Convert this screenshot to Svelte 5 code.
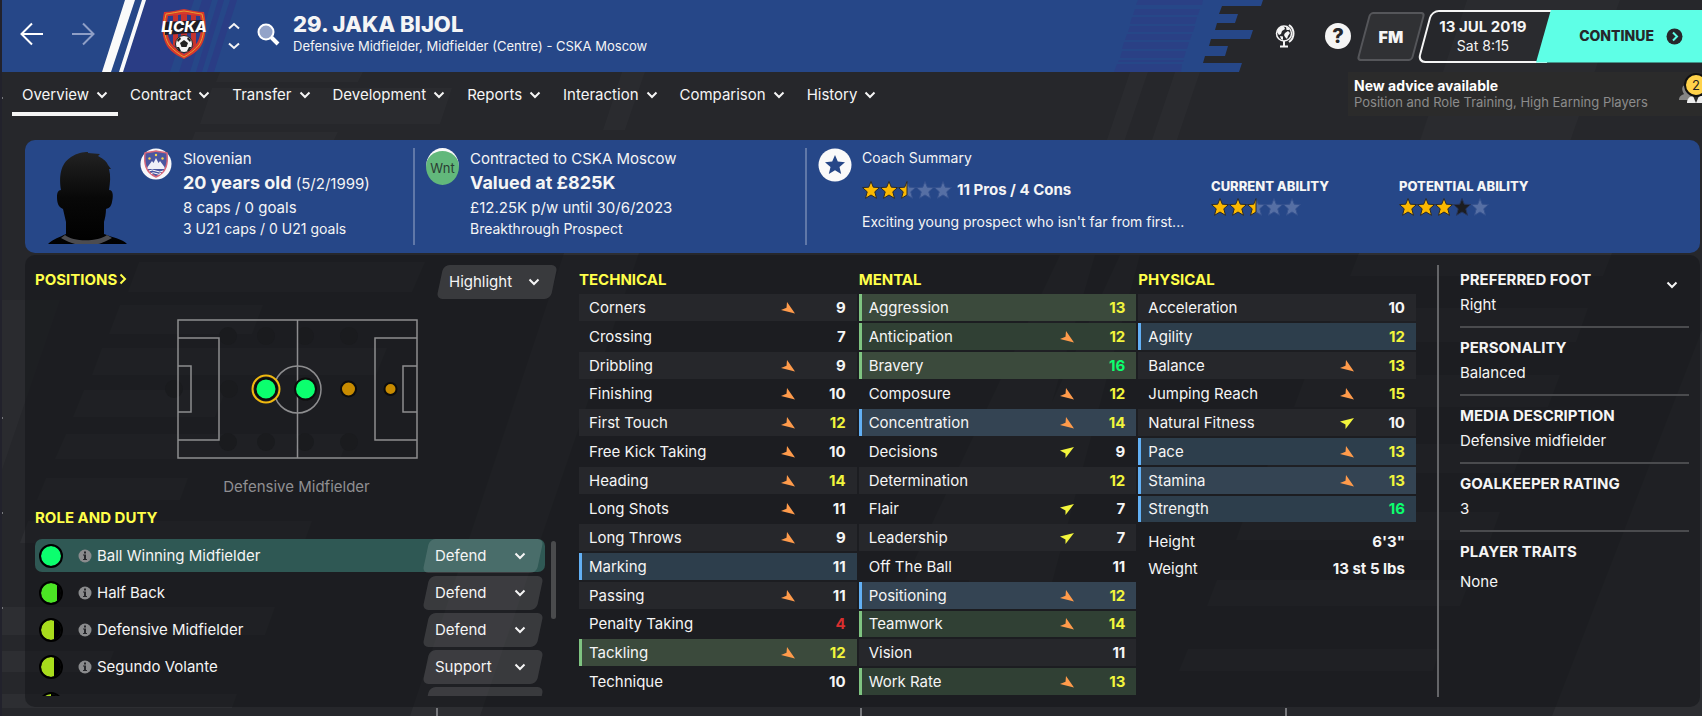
<script>
    const tabs = ['Overview', 'Contract', 'Transfer', 'Development', 'Reports', 'Interaction', 'Comparison', 'History'];

    const roles = [
        { name: 'Ball Winning Midfielder', duty: 'Defend', color: '#0bff6e', fill: 100, selected: true },
        { name: 'Half Back', duty: 'Defend', color: '#4be524', fill: 80 },
        { name: 'Defensive Midfielder', duty: 'Defend', color: '#a8dc1c', fill: 66 },
        { name: 'Segundo Volante', duty: 'Support', color: '#a8dc1c', fill: 66 },
        { name: '', duty: '', color: '#a8dc1c', fill: 50 }
    ];

    // [name, value, trend, importance for the selected role]
    const groups = [
        {
            title: 'TECHNICAL',
            rows: [
                ['Corners', 9, 'down', ''],
                ['Crossing', 7, '', ''],
                ['Dribbling', 9, 'down', ''],
                ['Finishing', 10, 'down', ''],
                ['First Touch', 12, 'down', ''],
                ['Free Kick Taking', 10, 'down', ''],
                ['Heading', 14, 'down', ''],
                ['Long Shots', 11, 'down', ''],
                ['Long Throws', 9, 'down', ''],
                ['Marking', 11, '', 'useful'],
                ['Passing', 11, 'down', ''],
                ['Penalty Taking', 4, '', ''],
                ['Tackling', 12, 'down', 'key'],
                ['Technique', 10, '', '']
            ]
        },
        {
            title: 'MENTAL',
            rows: [
                ['Aggression', 13, '', 'key'],
                ['Anticipation', 12, 'down', 'key'],
                ['Bravery', 16, '', 'key'],
                ['Composure', 12, 'down', ''],
                ['Concentration', 14, 'down', 'useful'],
                ['Decisions', 9, 'up', ''],
                ['Determination', 12, '', ''],
                ['Flair', 7, 'up', ''],
                ['Leadership', 7, 'up', ''],
                ['Off The Ball', 11, '', ''],
                ['Positioning', 12, 'down', 'useful'],
                ['Teamwork', 14, 'down', 'key'],
                ['Vision', 11, '', ''],
                ['Work Rate', 13, 'down', 'key']
            ]
        },
        {
            title: 'PHYSICAL',
            rows: [
                ['Acceleration', 10, '', ''],
                ['Agility', 12, '', 'useful'],
                ['Balance', 13, 'down', ''],
                ['Jumping Reach', 15, 'down', ''],
                ['Natural Fitness', 10, 'up', ''],
                ['Pace', 13, 'down', 'useful'],
                ['Stamina', 13, 'down', 'useful'],
                ['Strength', 16, '', 'useful']
            ]
        }
    ];

    const details = [
        ['PREFERRED FOOT', 'Right'],
        ['PERSONALITY', 'Balanced'],
        ['MEDIA DESCRIPTION', 'Defensive midfielder'],
        ['GOALKEEPER RATING', '3'],
        ['PLAYER TRAITS', 'None']
    ];

    const spots = [[228, 336], [266, 336], [305, 336], [349, 336], [174, 389], [229, 389], [228, 442], [266, 442], [305, 442], [349, 442]];

    function level(value) {
        if (value <= 5) return 'poor';
        if (value <= 11) return 'average';
        if (value <= 15) return 'good';
        return 'excellent';
    }

    const star = 'M9 0.5 L11.3 6.2 L17.5 6.6 L12.8 10.8 L14.5 17.3 L9 14 L3.5 17.3 L5.2 10.8 L0.5 6.6 L6.7 6.2 Z';
    const leftHalf = 'M9 0.5 L9 14 L3.5 17.3 L5.2 10.8 L0.5 6.6 L6.7 6.2 Z';
</script>

{#snippet chevron()}
    <svg class="chevron" width="12" height="8" viewBox="0 0 12 8" aria-hidden="true"><path d="M1.5 1.5 L6 6 L10.5 1.5" /></svg>
{/snippet}

{#snippet stars(list)}
    <span class="stars">
        {#each list as kind}
            <svg width="18" height="18" viewBox="0 0 18 18" aria-hidden="true">
                <path d={star} class={kind === 'half' ? 'none' : kind} />
                {#if kind === 'half'}<path d={leftHalf} class="full" />{/if}
            </svg>
        {/each}
    </span>
{/snippet}

<div class="app">
    <svg class="backdrop" width="1702" height="716" aria-hidden="true">
        <g fill="#fff" fill-opacity="0.018">
            <path d="M220 72 H363 L358 82 H216Z M212 88 H452 L440 124 H200Z M622 72 H645 L625 130 H603Z M195 132 H338 L334 140 H192Z" />
            <path d="M2 300 H60 L2 470Z M1130 72 H1148 L1118 160 H1100Z M1175 72 H1200 L1160 190 H1135Z M1467 0 H1620 L1560 170 H1410Z" />
        </g>
        <g fill="#fff" fill-opacity="0.035">
            <path d="M139 262 H425 L412 292 H128Z M120 305 H263 L252 334 H109Z M102 348 H387 L376 375 H92Z M84 390 H226 L215 417 H73Z M66 434 H350 L340 459 H55Z M46 478 H188 L180 500 H37Z M28 521 H312 L304 543 H20Z M2 607 H275 L265 635 H2Z M2 651 H114 L106 672 H2Z M2 694 H237 L232 708 H2Z" />
            <path d="M565 250 H640 L480 716 H410Z M1060 255 H1095 L1000 580 H905Z M1120 255 H1140 L1050 590 H965Z" />
            <path d="M1359 253 H1612 L1603 276 H1350Z M1335 308 H1588 L1576 342 H1323Z M1306 375 H1560 L1548 407 H1294Z M1275 444 H1524 L1514 473 H1265Z M1246 512 H1500 L1490 540 H1236Z M1217 580 H1470 L1460 606 H1207Z M1188 649 H1440 L1433 671 H1179Z M1702 330 V716 H1552Z" />
        </g>
        <path d="M0 48 H3 M0 98 H3 M0 418 H3 M0 513 H3 M0 608 H3 M437 708 V716 M861 708 V716 M1286 708 V716" stroke="#77787c" stroke-width="2" />
    </svg>

    <header class="topbar">
        <div class="titlebar">
            <svg class="stripes" width="245" height="72" aria-hidden="true">
                <path d="M144 0 H192 L168 72 H121Z M200 0 H210 L188 72 H177Z M216 0 H222 L200 72 H194Z M228 0 H235 L212 72 H205Z" fill="#2a3d85" />
                <path d="M123 0 H133 L109 72 H100Z M140 0 H144 L121 72 H117Z" fill="#fafafa" />
            </svg>
            <button class="icon back" aria-label="Back">
                <svg width="24" height="24" viewBox="0 0 24 24"><path d="M23 12 H2 M12 1.5 L1.5 12 L12 22.5" fill="none" stroke="#fff" stroke-width="2" /></svg>
            </button>
            <button class="icon forward" aria-label="Forward">
                <svg width="24" height="24" viewBox="0 0 24 24"><path d="M1 12 H22 M12 1.5 L22.5 12 L12 22.5" fill="none" stroke="#8f9fc6" stroke-width="2" /></svg>
            </button>
            <svg class="crest" width="46" height="52" viewBox="0 0 46 52" role="img" aria-label="CSKA Moscow">
                <path d="M23 1 C30 2 37 4 43 4 C46 18 45 30 40 38 C36 44 29 48 23 51 C17 48 10 44 6 38 C1 30 0 18 3 4 C9 4 16 2 23 1Z" fill="#d8382c" />
                <path d="M23 3 C30 4 36 5.500 41 6 C44 18 43 29 38 37 C34 42 28 46 23 49 C18 46 12 42 8 37 C3 29 2 18 5 6 C10 5.500 16 4 23 3Z" fill="none" stroke="#e6a02f" />
                <path d="M23 6 C29 7 34 8 39 8 C41 18 40 28 36 35 C32 40 27 43 23 46 C19 43 14 40 10 35 C6 28 5 18 7 8 C12 8 17 7 23 6Z" fill="#2b3d8d" />
                <path d="M12 7 H17 V40 L12 37Z M20 6 H26 V43 L20 44Z M30 7 H35 V37 L30 40Z" fill="#c7332e" />
                <path d="M4 14 L41 12 L43 24 L4 27Z" fill="#1f1c24" />
                <text x="23" y="24" text-anchor="middle" fill="#fff" font-size="15" font-weight="800" font-style="italic">ЦСКА</text>
                <circle cx="23" cy="36" r="8.500" fill="#f5f5f5" stroke="#222" />
                <path d="M23 32 L27 35 L25.500 39 H20.500 L19 35Z M16 32 L19 29 L20 31 L17 34Z M27 29 L30 32 L29 34 L26 31Z M15.500 39 L18 39 L20 43 L18 43Z M30.500 39 L28 39 L26 43 L28 43Z" fill="#222" />
            </svg>
            <div class="stepper">
                <button class="icon" aria-label="Previous player"><svg width="12" height="8" viewBox="0 0 12 8"><path class="stroke" d="M1 6.500 L6 2 L11 6.500" /></svg></button>
                <button class="icon" aria-label="Next player"><svg width="12" height="8" viewBox="0 0 12 8"><path class="stroke" d="M1 1.500 L6 6 L11 1.500" /></svg></button>
            </div>
            <button class="icon search" aria-label="Search">
                <svg width="23" height="23" viewBox="0 0 23 23"><circle cx="9" cy="9" r="7.500" fill="#93a3c8" stroke="#fff" stroke-width="2" /><path d="M14.500 14.500 L21 21" stroke="#fff" stroke-width="4" /></svg>
            </button>
            <div class="player">
                <h1>29. JAKA BIJOL</h1>
                <p>Defensive Midfielder, Midfielder (Centre) - CSKA Moscow</p>
            </div>
        </div>
        <svg class="flag" width="156" height="72" viewBox="0 0 156 72" aria-hidden="true">
            <path d="M0 0 H155 L153 6 H114 L111 14 H130 L127 23 H109 L107 30 H145 L142 39 H103 L101 46 H120 L117 56 H97 L95 63 H134 L131 72 H0Z" fill="#264788" />
            <path d="M30 0 H95 L94 5 H28Z M27 9 H92 L90 15 H25Z M24 17 H89 L87 24 H22Z M22 26 H87 L85 32 H20Z M19 34 H84 L82 40 H17Z M16 42 H81 L79 49 H14Z M14 51 H78 L76 58 H12Z M11 60 H76 L75 62 H10Z M9 64 H74 L73 72 H6Z" fill="#2a4085" />
        </svg>
        <button class="icon globe" aria-label="World">
            <svg width="20" height="24" viewBox="0 0 20 24">
                <circle cx="9" cy="9.500" r="7.500" fill="#26272b" stroke="#f5f5f5" stroke-width="1.500" />
                <path d="M3 5 L6 3 L9 2.500 L10 5 L7 7 L6 10 L4 11 L2 8Z M10 9 L13 7 L15 9 L13 12 L12 15 L10 13 L9 11Z M5 12 L8 12.500 L8 16 L6 15Z M11 2.500 L14 4 L14 6 L11.500 6Z" fill="#f5f5f5" />
                <path d="M14 1 C20 5 20 14 14 18 M9 17 V22 M5 22.500 H13" fill="none" stroke="#f5f5f5" stroke-width="2" />
            </svg>
        </button>
        <button class="icon help" aria-label="Help">?</button>
        <button class="fm"><span>FM</span></button>
        <div class="clock">
            <div class="date">
                <strong>13 JUL 2019</strong>
                <span>Sat 8:15</span>
            </div>
            <button class="continue">
                CONTINUE
                <svg width="17" height="17" viewBox="0 0 17 17" aria-hidden="true"><circle cx="8.500" cy="8.500" r="8" fill="#26272b" /><path d="M7 4.500 L11 8.500 L7 12.500" fill="none" stroke="#5effe6" stroke-width="2" /></svg>
            </button>
        </div>
    </header>

    <div class="menubar">
        <nav>
            {#each tabs as tab, i}
                <a href="#{tab.toLowerCase()}" class:active={i === 0}>{tab}{@render chevron()}</a>
            {/each}
        </nav>
        <div class="advice">
            <div>
                <strong>New advice available</strong>
                <span>Position and Role Training, High Earning Players</span>
            </div>
            <svg width="24" height="34" viewBox="0 0 24 34" aria-hidden="true">
                <path d="M1 28 C1 24 4 23 6 22 C3 17 4 13 8 13 H14 V28Z" fill="#858585" />
                <path d="M9 31 C9 27 11 25 14 24 H24 V31Z" fill="#eee" />
                <path d="M15 24 L18 31 L21 24Z" fill="#2b2b2b" />
                <circle cx="18" cy="13" r="11" fill="#ffd24a" stroke="#111" stroke-width="2" />
                <text x="18" y="18" text-anchor="middle" font-size="13" fill="#222">2</text>
            </svg>
        </div>
    </div>

    <section class="hero">
        <div class="bio">
            <svg class="photo" width="80" height="92" viewBox="0 0 80 92" aria-hidden="true">
                <defs>
                    <linearGradient id="shade" x1="0" y1="0" x2="0" y2="1">
                        <stop offset="0" stop-color="#222" />
                        <stop offset="0.500" stop-color="#080808" />
                        <stop offset="1" stop-color="#000" />
                    </linearGradient>
                </defs>
                <path d="M0 92 C5 87 12 85 18 82 V70 C17 66 16 61 15 57 C10 55 9 50 9 45 C9 41 10 38 13 38 C11 25 12 12 23 5 C29 1 35 0 40 0 L40 1 L52 2 L50 4 C56 7 59 10 60 13 L63 17 L61 17 C63 24 62 31 61 38 C66 38 65 46 64 50 C63 55 61 56 58 57 C58 62 57 66 56 70 V82 C63 85 75 87 79 92Z" fill="url(#shade)" />
                <path d="M17 83 C25 90 50 90 59 83 L64 86 C56 90 52 92 49 92 H27 C23 91 18 89 13 86Z" fill="#4c4c50" />
            </svg>
            <svg class="nation" width="32" height="32" viewBox="0 0 32 32" role="img" aria-label="Slovenia">
                <circle cx="16" cy="16" r="15.500" fill="#f7f7fa" />
                <path d="M5 5 C9 4 13 4 16 3 C19 4 23 4 27 5 C28 15 27 24 16 29 C5 24 4 15 5 5Z" fill="#4a56a0" stroke="#d6677a" stroke-width="1.500" />
                <path d="M7.500 19 L12 13 L13.500 15 L16 10 L18.500 15 L20 13 L24.500 19 V21 H7.500Z" fill="#f0f0f8" />
                <path d="M9 23 Q12 21 16 23 T23 23 M11 25.500 Q13 24 16 25.500 T21 25.500" fill="none" stroke="#fff" />
                <g fill="#f5d34b"><circle cx="16" cy="7" r="1.200" /><circle cx="9.500" cy="10.500" r="1.200" /><circle cx="22.500" cy="10.500" r="1.200" /></g>
            </svg>
            <div class="facts">
                <p>Slovenian</p>
                <p class="big"><strong>20 years old</strong> (5/2/1999)</p>
                <p>8 caps / 0 goals</p>
                <p class="tight">3 U21 caps / 0 U21 goals</p>
            </div>
        </div>
        <div class="deal">
            <span class="wanted">Wnt</span>
            <div class="facts">
                <p>Contracted to CSKA Moscow</p>
                <p class="big"><strong>Valued at £825K</strong></p>
                <p>£12.25K p/w until 30/6/2023</p>
                <p class="tight">Breakthrough Prospect</p>
            </div>
        </div>
        <div class="coach">
            <svg class="medal" width="34" height="34" viewBox="0 0 34 34" aria-hidden="true">
                <circle cx="17" cy="17" r="16.500" fill="#fafafa" />
                <path d="M17 7 L19.800 13.600 L27 14.200 L21.500 18.900 L23.200 26 L17 22.200 L10.800 26 L12.500 18.900 L7 14.200 L14.200 13.600Z" fill="#264788" />
            </svg>
            <div class="summary">
                <p>Coach Summary</p>
                <p class="rating">{@render stars(['full', 'full', 'half', 'none', 'none'])}<strong>11 Pros / 4 Cons</strong></p>
                <p>Exciting young prospect who isn't far from first...</p>
            </div>
            <div class="ability">
                <h3>CURRENT ABILITY</h3>
                {@render stars(['full', 'full', 'half', 'none', 'none'])}
            </div>
            <div class="ability">
                <h3>POTENTIAL ABILITY</h3>
                {@render stars(['full', 'full', 'full', 'dark', 'none'])}
            </div>
        </div>
    </section>

    <main class="panel">
        <section class="positions">
            <div class="head">
                <h2><a href="#positions">POSITIONS<svg width="8" height="12" viewBox="0 0 8 12" aria-hidden="true"><path d="M1.500 1.500 L6 6 L1.500 10.500" fill="none" stroke="#ffff4a" stroke-width="2" /></svg></a></h2>
                <div class="dropdown">
                    <select aria-label="Highlight"><option>Highlight</option></select>
                    {@render chevron()}
                </div>
            </div>
            <svg class="pitch" width="260" height="142" viewBox="164 318 260 142" role="img" aria-label="Pitch positions">
                <g fill="#1a1b1e">
                    {#each spots as [x, y]}<circle cx={x} cy={y} r="9" />{/each}
                </g>
                <g fill="none" stroke="#8d8d8f" stroke-width="1.500">
                    <path d="M178 320 H417 V458 H178Z M297.500 320 V458 M178 338 H219 V440 H178 M417 338 H375 V440 H417 M178 366 H191 V412 H178 M417 366 H403 V412 H417" />
                    <circle cx="297.500" cy="389.500" r="23.500" />
                </g>
                <circle cx="266" cy="389" r="13.500" fill="#1c1d20" stroke="#f0b90f" stroke-width="2" />
                <g stroke="#0c0c0c" stroke-width="2">
                    <circle cx="266" cy="389" r="10.500" fill="#0bff6e" />
                    <circle cx="305.500" cy="389" r="10.500" fill="#0bff6e" />
                    <circle cx="348.500" cy="389" r="7.500" fill="#c88b00" />
                    <circle cx="390.500" cy="389" r="6" fill="#c88b00" />
                </g>
            </svg>
            <p class="position">Defensive Midfielder</p>

            <h2>ROLE AND DUTY</h2>
            <div class="roles">
                <ul>
                    {#each roles as role}
                        <li class:selected={role.selected}>
                            <span class="dot" style="background: linear-gradient(to right, {role.color} {role.fill}%, #000 {role.fill}%)"></span>
                            <svg width="14" height="14" viewBox="0 0 14 14" aria-hidden="true"><circle cx="7" cy="7" r="6.500" /><path d="M6 2.500 H8 V4.500 H6Z M5 5.500 H8 V10 H9 V11 H5 V10 H6 V6.500 H5Z" /></svg>
                            <span class="name">{role.name}</span>
                            <div class="dropdown">
                                <select aria-label="{role.name} duty"><option>{role.duty}</option></select>
                                {@render chevron()}
                            </div>
                        </li>
                    {/each}
                </ul>
                <div class="scrollbar"></div>
            </div>
        </section>

        <section class="attributes">
            {#each groups as group}
                <div>
                    <table>
                        <caption>{group.title}</caption>
                        <tbody>
                            {#each group.rows as [name, value, trend, importance]}
                                <tr class={importance}>
                                    <th scope="row">{name}</th>
                                    <td class="trend">
                                        {#if trend === 'down'}
                                            <svg width="14" height="12" viewBox="0 0 14 12" aria-label="Falling"><path d="M6 0 L14 11.500 L0 8 L5.500 5.800Z" fill="#ff9b4b" /></svg>
                                        {:else if trend === 'up'}
                                            <svg width="14" height="12" viewBox="0 0 14 12" aria-label="Rising"><path d="M14 1 L5.500 12 L5.500 7.500 L0 4.500Z" fill="#f3f53c" /></svg>
                                        {/if}
                                    </td>
                                    <td class="value {level(value)}">{value}</td>
                                </tr>
                            {/each}
                        </tbody>
                    </table>
                    {#if group.title === 'PHYSICAL'}
                        <dl class="body">
                            <dt>Height</dt>
                            <dd>6'3"</dd>
                            <dt>Weight</dt>
                            <dd>13 st 5 lbs</dd>
                        </dl>
                    {/if}
                </div>
            {/each}
        </section>

        <aside>
            <dl>
                {#each details as [label, text]}
                    <div>
                        <dt>{label}</dt>
                        <dd>{text}</dd>
                    </div>
                {/each}
            </dl>
            <button class="icon more" aria-label="More details">{@render chevron()}</button>
        </aside>
    </main>
</div>

<style>
    :global(body) {
        background: #26272b;
    }

    .app {
        position: relative;
        min-height: 100vh;
        padding-bottom: 10px;
        border-left: 2px solid #22222c;
        box-sizing: border-box;
        overflow: hidden;
        color: #f5f5f5;
        font-family: Inter, "Liberation Sans", sans-serif;
        font-size: 15px;
        line-height: 20px;
    }

    .backdrop {
        position: absolute;
        top: 0;
        left: -2px;
    }

    h1, h2, h3, p, ul, dl, dd {
        margin: 0;
        padding: 0;
    }

    button, select {
        border: 0;
        padding: 0;
        background: none;
        color: inherit;
        font: inherit;
        cursor: pointer;
    }

    a {
        color: inherit;
        text-decoration: none;
    }

    .icon {
        display: flex;
        align-items: center;
        justify-content: center;
        flex: none;
    }

    .chevron path, .stroke {
        fill: none;
        stroke: #f5f5f5;
        stroke-width: 2;
    }

    /* top bar */
    .topbar {
        position: relative;
        display: flex;
        align-items: center;
        height: 72px;
    }

    .titlebar {
        position: relative;
        display: flex;
        flex: 1;
        align-items: center;
        height: 72px;
        box-sizing: border-box;
        padding: 0 0 4px 18px;
        background: #264788;
    }

    .titlebar > :not(.stripes) {
        position: relative;
    }

    .stripes {
        position: absolute;
        top: 0;
        left: 0;
    }

    .forward {
        margin-left: 27px;
    }

    .crest {
        margin-left: 66px;
    }

    .stepper {
        display: flex;
        flex-direction: column;
        gap: 12px;
        margin: 4px 0 0 21px;
    }

    .search {
        margin-left: 17px;
    }

    .player {
        margin-left: 13px;
        white-space: nowrap;
    }

    h1 {
        font-size: 22px;
        font-weight: 800;
        line-height: 24px;
    }

    .player p {
        font-size: 13px;
    }

    .flag {
        flex: none;
        margin-left: -1px;
    }

    .globe {
        margin-left: 11px;
    }

    .help {
        width: 26px;
        height: 26px;
        margin: 0 7px 0 30px;
        border-radius: 50%;
        background: #f5f5f5;
        color: #26272b;
        font-size: 20px;
        font-weight: 800;
    }

    .fm {
        width: 56px;
        height: 49px;
        margin-left: 5px;
        border: 2px solid #55565a;
        border-radius: 4px;
        box-sizing: border-box;
        background: #303134;
        font-size: 16px;
        font-weight: 900;
        transform: skewX(-15deg);
    }

    .fm span {
        display: block;
        transform: skewX(15deg);
    }

    .clock {
        position: relative;
        display: flex;
        width: 286px;
        height: 53px;
        margin-left: -3px;
    }

    .date {
        position: relative;
        display: flex;
        flex-direction: column;
        align-items: center;
        width: 134px;
        padding-top: 7px;
        box-sizing: border-box;
        line-height: 19px;
    }

    .date::before {
        content: '';
        position: absolute;
        inset: 0 -4px 0 8px;
        border: 2px solid #f5f5f5;
        border-radius: 8px 0 0 8px;
        transform: skewX(-15deg);
    }

    .date strong, .date span {
        position: relative;
        font-size: 15px;
    }

    .date span {
        font-size: 14px;
    }

    .continue {
        position: relative;
        display: flex;
        flex: 1;
        align-items: center;
        justify-content: flex-end;
        gap: 12px;
        margin-left: -14px;
        padding-right: 19px;
        background: #5effe6;
        clip-path: polygon(15px 0, 100% 0, 100% 100%, 0 100%);
        color: #26272b;
        font-size: 14px;
        font-weight: 800;
    }

    /* section tabs */
    .menubar {
        position: relative;
        display: flex;
        justify-content: space-between;
        height: 44px;
    }

    nav {
        display: flex;
        gap: 2px;
        padding-left: 10px;
        font-size: 15px;
    }

    nav a {
        display: flex;
        align-items: center;
        gap: 7px;
        padding: 6px 10px 0;
        border-bottom: 4px solid transparent;
    }

    nav a.active {
        border-color: #f5f5f5;
    }

    .advice {
        display: flex;
        align-items: flex-start;
        gap: 22px;
        padding-left: 6px;
        background: #2b2b2b;
        font-size: 14px;
        line-height: 16px;
        white-space: nowrap;
    }

    .advice div {
        width: 302px;
        padding-top: 6px;
    }

    .advice strong, .advice span {
        display: block;
    }

    .advice span {
        color: #8c8c8c;
        font-size: 13px;
    }

    .advice strong {
        color: #fff;
    }

    /* player summary */
    .hero {
        position: relative;
        display: grid;
        grid-template-columns: 388fr 392fr 895fr;
        height: 113px;
        margin: 24px 2px 2px 23px;
        border-radius: 10px;
        background: #264788;
    }

    .hero > div {
        display: flex;
        align-items: flex-start;
        margin: 8px 0;
    }

    .hero > div + div {
        border-left: 2px solid #6078a8;
        padding-left: 11px;
    }

    .photo {
        margin: 4px 12px 0 23px;
    }

    .nation {
        margin-right: 11px;
    }

    .facts p {
        line-height: 22px;
        white-space: nowrap;
    }

    .facts .big {
        font-size: 15px;
        line-height: 26px;
    }

    .facts .big strong {
        font-size: 18px;
    }

    .facts .tight {
        font-size: 14px;
        line-height: 20px;
    }

    .wanted {
        width: 33px;
        height: 34px;
        margin-right: 11px;
        border-top: 3px solid #fafafa;
        border-radius: 50%;
        background: #62b87b;
        color: #2b3d33;
        font-size: 13px;
        line-height: 34px;
        text-align: center;
    }

    .medal {
        margin-right: 10px;
    }

    .summary {
        width: 349px;
        font-size: 14px;
        white-space: nowrap;
    }

    .summary .rating {
        display: flex;
        align-items: center;
        gap: 5px;
        margin: 12px 0;
        font-size: 15px;
    }

    .stars {
        display: flex;
    }

    .stars path {
        stroke: #27365c;
    }

    .stars .full {
        fill: #fcb900;
        stroke: #2b2b2b;
    }

    .stars .none {
        fill: #566fa4;
        stroke: #35528f;
    }

    .stars .dark {
        fill: #1c1d20;
    }

    .ability {
        width: 188px;
        padding-top: 28px;
    }

    .ability h3 {
        font-size: 13px;
        font-weight: 800;
        line-height: 20px;
        white-space: nowrap;
    }

    .ability .stars {
        margin-top: 2px;
    }

    /* main panel */
    .panel {
        position: relative;
        display: grid;
        grid-template-columns: 523fr 837fr 252fr;
        gap: 21px;
        margin: 0 2px 0 23px;
        padding: 10px 11px 10px 10px;
        border-radius: 10px;
        background: rgba(22, 23, 27, 0.6);
    }

    h2, caption {
        color: #ffff4a;
        font-size: 15px;
        font-weight: 700;
        line-height: 20px;
        text-align: left;
    }

    .head {
        display: flex;
        justify-content: space-between;
    }

    .head h2 {
        padding-top: 5px;
    }

    h2 svg {
        margin-left: 2px;
    }

    .dropdown {
        position: relative;
        display: flex;
        align-items: center;
        width: 122px;
        height: 34px;
    }

    .dropdown::before {
        content: '';
        position: absolute;
        inset: 0 4px;
        border-radius: 6px;
        background: rgba(255, 255, 255, 0.13);
        transform: skewX(-12deg);
    }

    .dropdown select {
        position: relative;
        width: 100%;
        height: 100%;
        padding-left: 13px;
        appearance: none;
    }

    .dropdown option {
        color: #222;
    }

    .dropdown .chevron {
        position: absolute;
        right: 18px;
        pointer-events: none;
    }

    .pitch {
        display: block;
        margin: 19px 0 0 129px;
    }

    .position {
        margin: 17px 0 11px;
        color: #8f8f92;
        text-align: center;
    }

    .roles {
        display: flex;
        gap: 6px;
        height: 157px;
        margin-top: 11px;
        overflow: hidden;
    }

    ul {
        flex: 1;
        list-style: none;
    }

    li {
        display: flex;
        align-items: center;
        height: 33px;
        margin-bottom: 4px;
        padding-left: 4px;
        border-radius: 7px;
    }

    li.selected {
        background: #2f5854;
    }

    .dot {
        width: 20px;
        height: 20px;
        border: 2px solid #000;
        border-radius: 50%;
        background-clip: padding-box !important;
    }

    li > svg {
        margin: 0 5px 0 15px;
        fill: #8a8b8d;
    }

    li > svg path {
        fill: #26272b;
    }

    .name {
        flex: 1;
    }

    li .dropdown {
        margin-right: 1px;
    }

    .scrollbar {
        width: 5px;
        height: 78px;
        margin: 2px 2px 0 0;
        border-radius: 3px;
        background: #4a4b4d;
    }

    /* attribute tables */
    .attributes {
        display: grid;
        grid-template-columns: repeat(3, 1fr);
        gap: 2px;
        padding-top: 5px;
    }

    table {
        width: 100%;
        border-spacing: 0;
    }

    caption {
        padding-bottom: 4px;
    }

    tr {
        height: 29px;
    }

    tr:nth-child(4n) {
        height: 28px;
    }

    th, td {
        height: 26px;
        padding: 0;
        border-bottom: 2px solid transparent;
        background-clip: padding-box;
        line-height: 20px;
    }

    tr:nth-child(odd) > * {
        background-color: #26272b;
    }

    tr.key > * {
        background-color: #304034;
    }

    tr.key:nth-child(odd) > * {
        background-color: #3b4a3c;
    }

    tr.useful > * {
        background-color: #2d3e4c;
    }

    tr.useful:nth-child(odd) > * {
        background-color: #344453;
    }

    th {
        padding-left: 10px;
        font-weight: 400;
        text-align: left;
    }

    .key th {
        box-shadow: inset 3px 0 #7fc481;
    }

    .useful th {
        box-shadow: inset 3px 0 #62b0f5;
    }

    .trend {
        width: 15px;
    }

    .trend svg {
        display: block;
    }

    .value {
        width: 50px;
        padding-right: 11px;
        font-weight: 700;
        text-align: right;
    }

    .poor {
        color: #d92f2f;
    }

    .good {
        color: #f1f53c;
    }

    .excellent {
        color: #0bff6e;
    }

    .body {
        display: grid;
        grid-template-columns: 1fr auto;
        row-gap: 7px;
        padding: 8px 11px 0 10px;
    }

    .body dd {
        font-weight: 700;
        text-align: right;
    }

    /* details column */
    aside {
        display: flex;
        align-items: flex-start;
        position: relative;
        border-left: 2px solid #646568;
        padding-left: 21px;
    }

    aside dl {
        flex: 1;
    }

    aside dl > div {
        height: 56px;
        padding-top: 5px;
        margin-bottom: 5px;
        border-bottom: 2px solid #4a4b4e;
    }

    aside dl > div:last-child {
        border: 0;
    }

    aside dl dt {
        font-weight: 700;
    }

    aside dl dd {
        padding-top: 5px;
    }

    aside dl > div:last-child dd {
        padding-top: 10px;
    }

    .more {
        position: absolute;
        top: 12px;
        right: 10px;
        width: 14px;
        height: 16px;
    }
</style>
